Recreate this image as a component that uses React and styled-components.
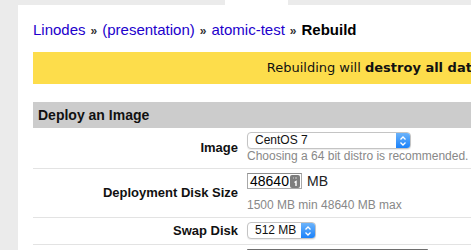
import React from 'react';
import styled, { createGlobalStyle } from 'styled-components';

const GlobalStyle = createGlobalStyle`
  html, body {
    margin: 0;
    padding: 0;
    background: #ebebeb;
    overflow: hidden;
    font-family: "Liberation Sans", Arial, sans-serif;
  }
`;

function Select({ value, width }) {
  return (
    <SelectBox width={width}>
      <SelectValue>{value}</SelectValue>
      <SelectArrow>
        <svg width="8" height="12" viewBox="0 0 8 12">
          <path d="M1.5 4.5 L4 2 L6.5 4.5" fill="none" stroke="white" strokeWidth="1.3" />
          <path d="M1.5 7.5 L4 10 L6.5 7.5" fill="none" stroke="white" strokeWidth="1.3" />
        </svg>
      </SelectArrow>
    </SelectBox>
  );
}

function App() {
  return (
    <>
      <GlobalStyle />
      <TopStrip>
        <Tab />
      </TopStrip>
      <Panel>
        <Breadcrumb>
          <Crumb href="#">Linodes</Crumb>
          <Sep>»</Sep>
          <Crumb href="#">(presentation)</Crumb>
          <Sep>»</Sep>
          <Crumb href="#">atomic-test</Crumb>
          <Sep>»</Sep>
          <Current>Rebuild</Current>
        </Breadcrumb>

        <Warning>
          Rebuilding will <b>destroy all data on this Linode</b>.
        </Warning>

        <Section>
          <SectionHeader>Deploy an Image</SectionHeader>

          <Row>
            <Label>Image</Label>
            <Field>
              <Select value="CentOS 7" width={164} />
              <Hint>Choosing a 64 bit distro is recommended.</Hint>
            </Field>
          </Row>

          <Row>
            <Label>Deployment Disk Size</Label>
            <Field>
              <InputLine>
                <NumberInput>
                  <span>48640</span>
                  <KeyIcon>
                    <svg width="10" height="13" viewBox="0 0 10 13">
                      <rect x="0" y="0" width="10" height="13" rx="2" fill="#7d7d7d" />
                      <path d="M3 3 h1 M6 2 v2" stroke="#cfcfcf" strokeWidth="1" />
                      <path d="M4.5 7.5 L6 6.5 V11" fill="none" stroke="white" strokeWidth="1.4" />
                    </svg>
                  </KeyIcon>
                </NumberInput>
                <Unit>MB</Unit>
              </InputLine>
              <Hint space={9}>1500 MB min 48640 MB max</Hint>
            </Field>
          </Row>

          <Row>
            <Label>Swap Disk</Label>
            <Field>
              <Select value="512 MB" width={69} />
            </Field>
          </Row>

          <Row>
            <Label />
            <Field>
              <TextBox />
            </Field>
          </Row>
        </Section>
      </Panel>
    </>
  );
}

const TopStrip = styled.div`
  height: 5px;
  padding-left: 225px;
`;

const Tab = styled.div`
  width: 63px;
  height: 5px;
  background: #fff;
`;

const Panel = styled.div`
  margin-left: 18px;
  width: 794px;
  background: #fff;
  padding: 16px 15px 0;
  min-height: 300px;
`;

const Breadcrumb = styled.div`
  font-size: 15px;
  line-height: 18px;
  color: #333;
`;

const Crumb = styled.a`
  color: #2200cc;
  text-decoration: none;
`;

const Sep = styled.span`
  margin: 0 5px;
  font-size: 12px;
  font-weight: bold;
  color: #333;
`;

const Current = styled.span`
  font-weight: bold;
  color: #000;
`;

const Warning = styled.div`
  margin-top: 12px;
  height: 32px;
  line-height: 32px;
  background: #fddd4b;
  text-align: center;
  font-family: "DejaVu Sans", Verdana, sans-serif;
  font-size: 13px;
  color: #111;
  white-space: nowrap;
`;

const Section = styled.div`
  margin-top: 18px;
`;

const SectionHeader = styled.div`
  height: 26px;
  line-height: 26px;
  background: #cccccc;
  padding-left: 5px;
  font-size: 14px;
  font-weight: bold;
  color: #111;
`;

const Row = styled.div`
  display: grid;
  grid-template-columns: 205px 1fr;
  column-gap: 9px;
  align-items: center;
  padding: 4px 0 5px;
  border-bottom: 1px solid #e3e3e3;
`;

const Label = styled.div`
  text-align: right;
  font-size: 13px;
  font-weight: bold;
  color: #111;
`;

const Field = styled.div`
  display: flex;
  flex-direction: column;
  align-items: flex-start;
`;

const Hint = styled.div`
  margin-top: ${props => props.space || 0}px;
  font-size: 12px;
  line-height: 14px;
  color: #888;
`;

const SelectBox = styled.div`
  display: flex;
  width: ${props => props.width}px;
  height: 17px;
  box-sizing: border-box;
  border: 1px solid #c4c4c4;
  border-radius: 4px;
  background: #fff;
  overflow: hidden;
  box-shadow: 0 1px 1px rgba(0, 0, 0, 0.08);
`;

const SelectValue = styled.div`
  flex: 1;
  padding-left: 7px;
  font-size: 12px;
  line-height: 15px;
  color: #111;
`;

const SelectArrow = styled.div`
  width: 14px;
  display: flex;
  align-items: center;
  justify-content: center;
  background: linear-gradient(#6cb3fa, #1a82fb);
`;

const InputLine = styled.div`
  display: flex;
  align-items: center;
  gap: 5px;
  height: 16px;
`;

const NumberInput = styled.div`
  display: flex;
  align-items: center;
  justify-content: space-between;
  width: 55px;
  height: 16px;
  box-sizing: border-box;
  border: 1px solid #a9a9a9;
  border-top-color: #8e8e8e;
  padding: 0 1px 0 2px;
  font-size: 14px;
  line-height: 14px;
  color: #000;
`;

const KeyIcon = styled.span`
  display: flex;
  margin-left: -2px;
`;

const Unit = styled.span`
  font-size: 14px;
  line-height: 16px;
  color: #222;
`;

const TextBox = styled.div`
  width: 181px;
  height: 17px;
  box-sizing: border-box;
  border: 1px solid #a9a9a9;
  border-top-color: #6e6e6e;
`;

export default App;
